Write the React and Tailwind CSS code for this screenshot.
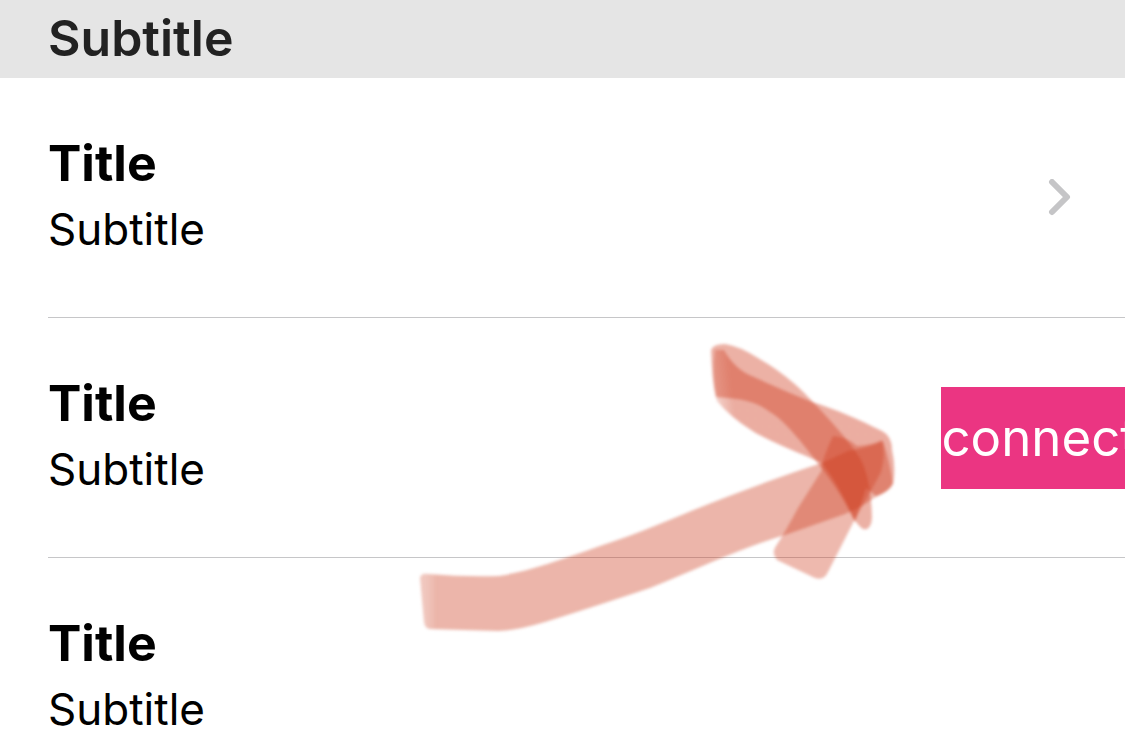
import React from "react";

const items = [
  { id: 1, title: "Title", subtitle: "Subtitle", accessory: "chevron" },
  { id: 2, title: "Title", subtitle: "Subtitle", accessory: "connect" },
  { id: 3, title: "Title", subtitle: "Subtitle", accessory: null },
];

const Chevron = () => (
  <svg
    className="mr-[53px] h-[38px] w-6 shrink-0"
    viewBox="0 0 24 38"
    fill="none"
    stroke="#c5c5c7"
    strokeWidth="6"
    strokeLinecap="round"
    strokeLinejoin="round"
    aria-hidden="true"
  >
    <path d="M4 3 L19 18 L4 33" />
  </svg>
);

// Marker arrow, each stroke is a translucent layer so the overlaps get darker
const MarkerArrow = () => (
  <svg
    className="pointer-events-none absolute top-[330px] left-[410px] h-[310px] w-[500px]"
    viewBox="410 330 500 310"
    aria-hidden="true"
  >
    <defs>
      <linearGradient id="shaft" gradientUnits="userSpaceOnUse" x1="420" y1="600" x2="890" y2="600">
        <stop offset="0" stopColor="#cc3d1e" stopOpacity="0.28" />
        <stop offset="0.015" stopColor="#cc3d1e" stopOpacity="0.3" />
        <stop offset="0.035" stopColor="#cc3d1e" stopOpacity="0.38" />
        <stop offset="1" stopColor="#cc3d1e" stopOpacity="0.38" />
      </linearGradient>
      <linearGradient id="head" gradientUnits="userSpaceOnUse" x1="711" y1="380" x2="731" y2="378">
        <stop offset="0" stopColor="#cf3c1f" stopOpacity="0.2" />
        <stop offset="1" stopColor="#cf3c1f" stopOpacity="0.42" />
      </linearGradient>
      <filter id="soft" colorInterpolationFilters="sRGB">
        <feGaussianBlur stdDeviation="1.5" />
      </filter>
    </defs>
    <g filter="url(#soft)" fill="#cf3c1f" fillOpacity="0.4">
      <path
        fill="url(#shaft)"
        fillOpacity="1"
        d="M420 578 Q421 573 428 574 Q465 577 499 576 C530 571 560 560 600 546 C650 530 690 510 740 492 Q790 473 822 463 L848 451 Q870 447 883 441 Q889 460 893 483 Q890 491 874 498 Q862 507 845 514 L788 534 C740 548 700 568 650 588 Q590 608 545 622 Q515 631 498 631 L430 629 Q425 629 424 622 Z"
      />
      <path d="M711 350 Q713 344 725 344 Q739 346 758 358 C785 374 798 386 812 401 C832 422 848 440 860 458 Q871 478 872 518 Q871 531 863 529 Q858 526 852 516 C842 496 831 480 820 466 C800 440 785 421 770 412 Q755 400 728 398 L716 397 Q712 380 711 350 Z" />
      <path
        fill="url(#head)"
        fillOpacity="1"
        d="M715 350 L724 350 Q735 370 754 377 Q780 389 812 402 C835 409 860 420 882 431 Q892 436 892 450 Q896 468 893 484 Q889 492 876 496 L866 488 L855 522 Q841 488 822 463 C800 453 771 442 754 432 Q730 417 717 401 Q711 380 715 350 Z"
      />
      <path
        fillOpacity="0.36"
        d="M833 436 Q847 437 857 446 Q873 445 882 440 Q886 456 881 472 Q869 495 855 519 L828 572 Q824 581 815 578 L777 560 Q771 553 776 546 Q784 534 798 508 L822 470 Q820 464 833 436 Z"
      />
    </g>
  </svg>
);

const ListItem = ({ item }) => (
  <li className="ml-12 flex h-60 items-center justify-between border-b border-[#c6c6c8]">
    <div className="pb-1">
      <h3 className="text-[50px] leading-[66px] font-bold">{item.title}</h3>
      <p className="text-[44px] leading-[66px]">{item.subtitle}</p>
    </div>
    {item.accessory === "chevron" && <Chevron />}
    {item.accessory === "connect" && (
      <button
        type="button"
        className="-mr-3 h-[102px] shrink-0 bg-[#eb3582] text-[51px] leading-[102px] text-white"
      >
        connect
      </button>
    )}
  </li>
);

const App = () => {
  return (
    <main className="relative h-screen overflow-hidden bg-white font-['Inter',sans-serif] text-black">
      <header className="bg-[#e5e5e5] px-12 pb-0.5">
        <h2 className="text-[50px] leading-[76px] font-semibold text-[#222222]">Subtitle</h2>
      </header>
      <ul>
        {items.map((item) => (
          <ListItem key={item.id} item={item} />
        ))}
      </ul>
      <MarkerArrow />
    </main>
  );
};

export default App;
